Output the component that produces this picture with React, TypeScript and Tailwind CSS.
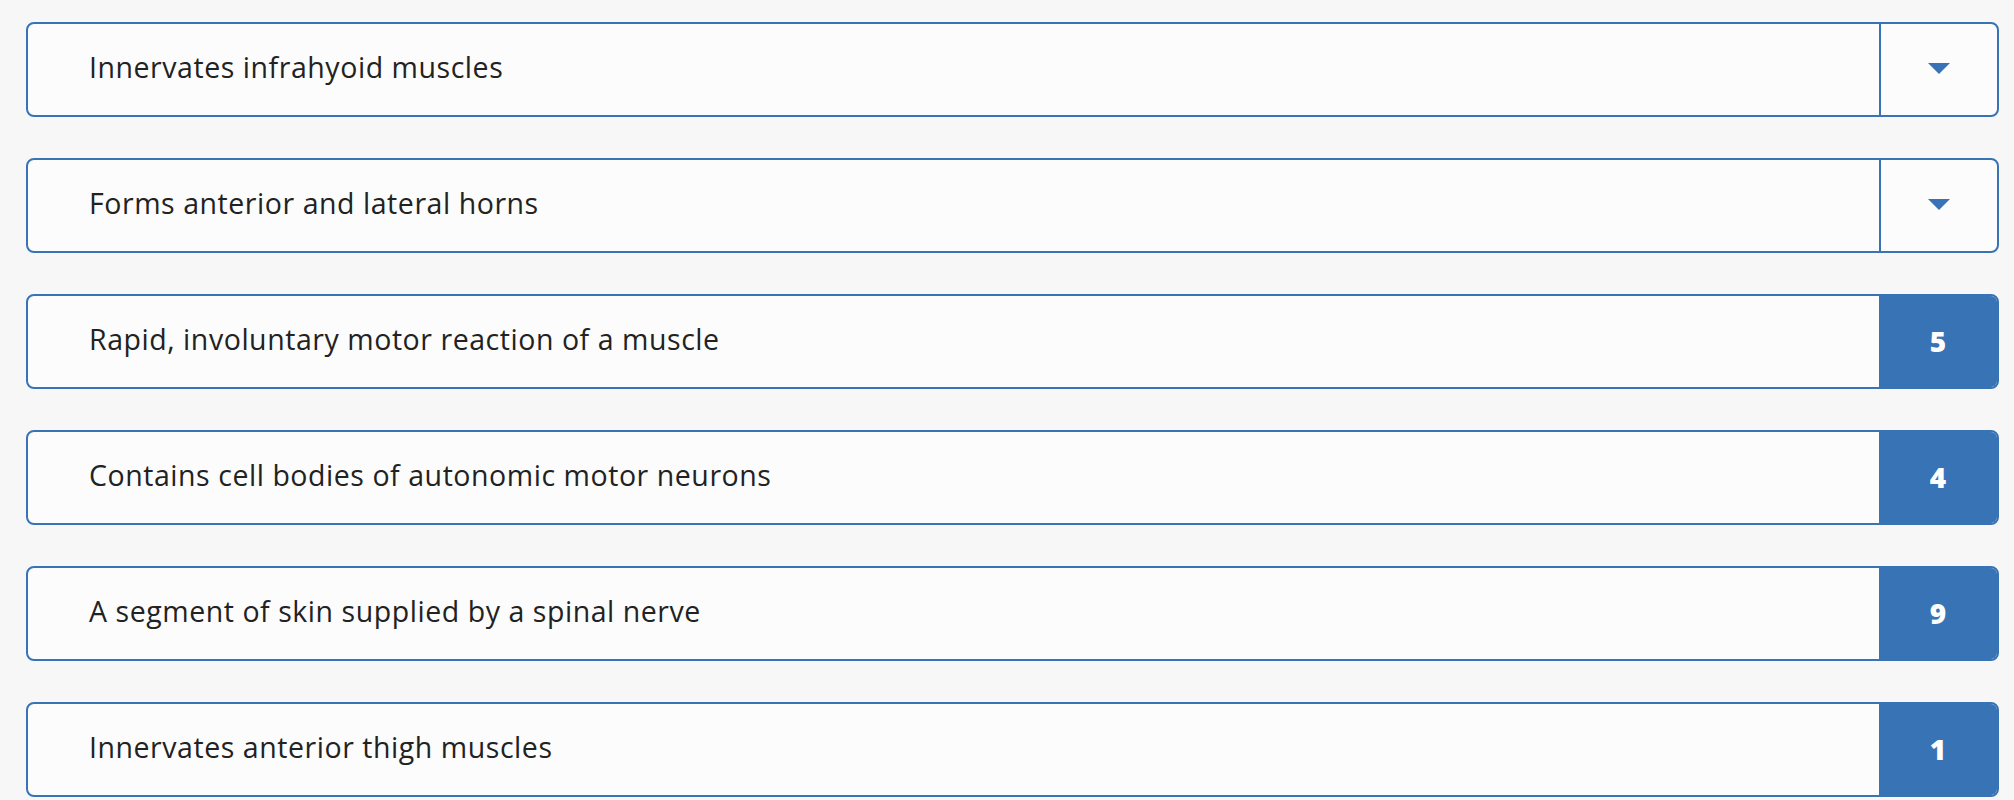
import React from 'react';

type Item = { text: string; answer?: string };

const items: Item[] = [
  { text: 'Innervates infrahyoid muscles' },
  { text: 'Forms anterior and lateral horns' },
  { text: 'Rapid, involuntary motor reaction of a muscle', answer: '5' },
  { text: 'Contains cell bodies of autonomic motor neurons', answer: '4' },
  { text: 'A segment of skin supplied by a spinal nerve', answer: '9' },
  { text: 'Innervates anterior thigh muscles', answer: '1' },
];

function Caret() {
  return (
    <svg width="22" height="12" viewBox="0 0 22 12" className="block">
      <path d="M0 0 H22 L11 11 Z" fill="#3873b5" />
    </svg>
  );
}

export default function App() {
  return (
    <div className="min-h-screen bg-[#f7f7f7] pt-[22px] pl-[26px] pr-[15px] font-['Open_Sans','Liberation_Sans',sans-serif]">
      <div className="flex flex-col gap-[41px]">
        {items.map((item, idx) => (
          <div
            key={idx}
            className="flex h-[95px] items-stretch overflow-hidden rounded-[8px] border-2 border-[#3873b5] bg-[#fcfcfc]"
          >
            <div className="flex flex-1 items-center pb-[5px] pl-[61px] text-[28.5px] tracking-[0.55px] text-[#222222]">
              {item.text}
            </div>
            {item.answer ? (
              <div className="flex w-[118px] items-center justify-center bg-[#3873b5] pb-[2px] text-[28px] font-extrabold text-white">
                {item.answer}
              </div>
            ) : (
              <div className="flex w-[118px] items-center justify-center border-l-2 border-[#3873b5] pb-[2px]">
                <Caret />
              </div>
            )}
          </div>
        ))}
      </div>
    </div>
  );
}
